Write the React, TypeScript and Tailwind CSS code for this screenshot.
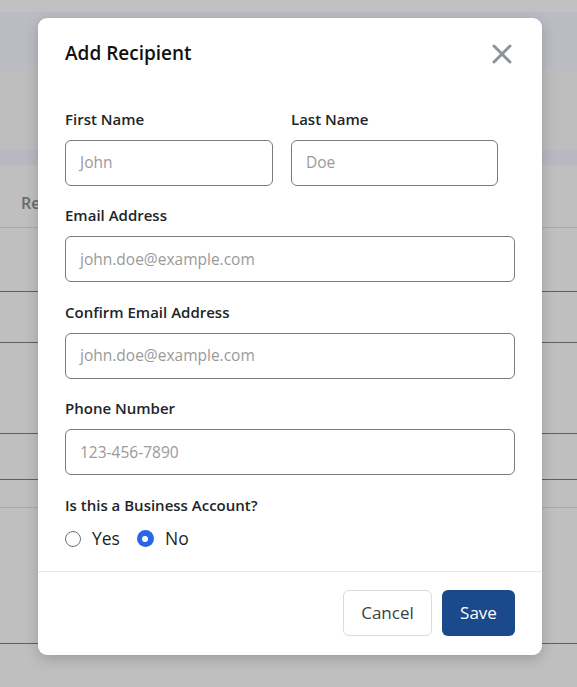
import React from "react";

function Field({ label, placeholder }: { label: string; placeholder: string }) {
  return (
    <div className="flex flex-col">
      <label className="text-[15px] leading-[22px] font-semibold text-[#212529] mb-[10px]">{label}</label>
      <div className="h-[46px] rounded-[6px] border border-[#7a7a7a] flex items-center pl-[14px] text-[15.5px] text-[#9a9a9a]">
        {placeholder}
      </div>
    </div>
  );
}

export default function App() {
  return (
    <div
      className="relative w-[577px] h-[687px] overflow-hidden bg-[#bfbfbf]"
      style={{ fontFamily: '"Open Sans", "Noto Sans", sans-serif' }}
    >
      {/* background page (dimmed) */}
      <div className="flex flex-col">
        <div className="h-[12px] bg-[#c1c1c1]" />
        <div className="h-[56px] bg-[#babbc3]" />
        <div className="h-[82px] bg-[#bdbdbd]" />
        <div className="h-[15px] bg-[#b7b8c0]" />
        <div className="h-[62px] flex items-center pl-[21px] pt-[14px] text-[16px] font-semibold text-[#6a6a6a]">
          Re
        </div>
        <div className="h-[1px] bg-[#a9a9a9]" />
        <div className="h-[63px]" />
        <div className="h-[1px] bg-[#5f5f5f]" />
        <div className="h-[50px]" />
        <div className="h-[1px] bg-[#5f5f5f]" />
        <div className="h-[90px]" />
        <div className="h-[1px] bg-[#5f5f5f]" />
        <div className="h-[45px]" />
        <div className="h-[1px] bg-[#5f5f5f]" />
        <div className="h-[27px]" />
        <div className="h-[1px] bg-[#a9a9a9]" />
        <div className="h-[135px]" />
        <div className="h-[1px] bg-[#5f5f5f]" />
      </div>

      {/* modal */}
      <div className="absolute left-[38px] top-[18px] w-[504px] h-[637px] bg-white rounded-[9px] shadow-[0_4px_14px_rgba(0,0,0,0.18)] flex flex-col">
        <div className="flex items-start justify-between pl-[27px] pr-[28px] pt-[21px]">
          <h2 className="text-[19px] leading-[28px] font-semibold text-[#111]">Add Recipient</h2>
          <button className="mt-[3px] w-[24px] h-[24px] flex items-center justify-center text-[#8e929b]">
            <svg width="20" height="20" viewBox="0 0 20 20" fill="none" stroke="currentColor" strokeWidth="3" strokeLinecap="round">
              <path d="M2 2 L18 18 M18 2 L2 18" />
            </svg>
          </button>
        </div>

        <div className="flex flex-col px-[27px] pt-[41px]">
          <div className="grid grid-cols-[208px_207px] gap-x-[18px]">
            <Field label="First Name" placeholder="John" />
            <Field label="Last Name" placeholder="Doe" />
          </div>
          <div className="mt-[18.4px]">
            <Field label="Email Address" placeholder="john.doe@example.com" />
          </div>
          <div className="mt-[18.4px]">
            <Field label="Confirm Email Address" placeholder="john.doe@example.com" />
          </div>
          <div className="mt-[18.4px]">
            <Field label="Phone Number" placeholder="123-456-7890" />
          </div>
          <div className="mt-[18.4px] text-[15px] leading-[22px] font-semibold text-[#212529]">
            Is this a Business Account?
          </div>
          <div className="mt-[11px] flex items-center h-[24px] text-[17.5px] text-[#1f1f1f]">
            <span className="w-[16px] h-[16px] rounded-full border border-[#6f6f6f] bg-white" />
            <span className="ml-[11px]">Yes</span>
            <span className="ml-[17px] w-[17px] h-[17px] rounded-full bg-[#2a66e3] flex items-center justify-center">
              <span className="w-[6px] h-[6px] rounded-full bg-white" />
            </span>
            <span className="ml-[11px]">No</span>
          </div>
        </div>

        <div className="mt-auto border-t border-[#e6e6e6] flex justify-end gap-[10px] px-[27px] pt-[18px] pb-[19px]">
          <button className="h-[46px] w-[89px] rounded-[6px] border border-[#d8dbe0] bg-white text-[17px] text-[#3a3f46]">
            Cancel
          </button>
          <button className="h-[46px] w-[73px] rounded-[6px] bg-[#1a4a8c] text-[17px] text-white">
            Save
          </button>
        </div>
      </div>
    </div>
  );
}
